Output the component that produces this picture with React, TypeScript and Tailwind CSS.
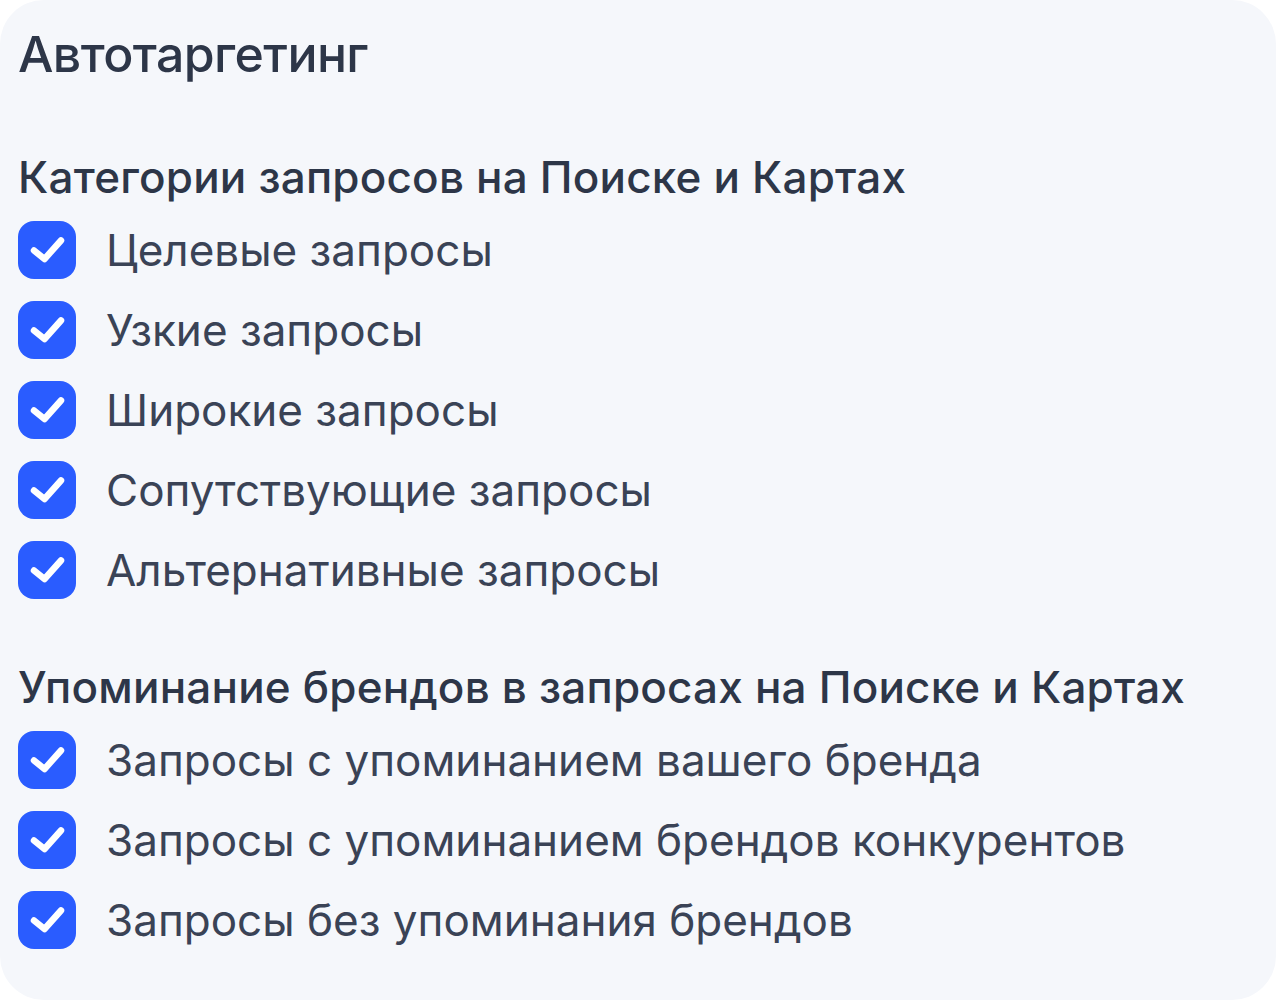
import React from "react";

const groups = [
  {
    title: "Категории запросов на Поиске и Картах",
    items: [
      "Целевые запросы",
      "Узкие запросы",
      "Широкие запросы",
      "Сопутствующие запросы",
      "Альтернативные запросы",
    ],
  },
  {
    title: "Упоминание брендов в запросах на Поиске и Картах",
    items: [
      "Запросы с упоминанием вашего бренда",
      "Запросы с упоминанием брендов конкурентов",
      "Запросы без упоминания брендов",
    ],
  },
];

function CheckBox() {
  return (
    <span className="flex h-[58px] w-[58px] shrink-0 items-center justify-center rounded-[16px] bg-[#2a5cff]">
      <svg width="58" height="58" viewBox="0 0 58 58" fill="none">
        <path
          d="M16 29.5l10.5 8.5L43 19.5"
          stroke="white"
          strokeWidth="6.5"
          strokeLinecap="round"
          strokeLinejoin="round"
        />
      </svg>
    </span>
  );
}

export default function App() {
  return (
    <div className="h-[1000px] w-[1276px] bg-white">
      <div
        className="flex h-full w-full flex-col rounded-[44px] bg-[#f5f7fb] px-[18px] pt-[22px] text-[#2d3648]"
        style={{ fontFamily: "Inter, 'Noto Sans', sans-serif" }}
      >
        <h1 className="text-[50px] leading-[64px] font-medium tracking-[-0.6px]">Автотаргетинг</h1>
        {groups.map((g, gi) => (
          <section key={gi} className={gi === 0 ? "mt-[63px]" : "mt-[60px]"}>
            <h2 className="text-[44px] leading-[56px] font-medium tracking-[0.2px]">{g.title}</h2>
            <ul className="mt-[16px] flex flex-col gap-[22px]">
              {g.items.map((it) => (
                <li key={it} className="flex items-center gap-[30px]">
                  <CheckBox />
                  <span className="text-[44px] leading-[58px] tracking-[0px] text-[#3a4356]">{it}</span>
                </li>
              ))}
            </ul>
          </section>
        ))}
      </div>
    </div>
  );
}
